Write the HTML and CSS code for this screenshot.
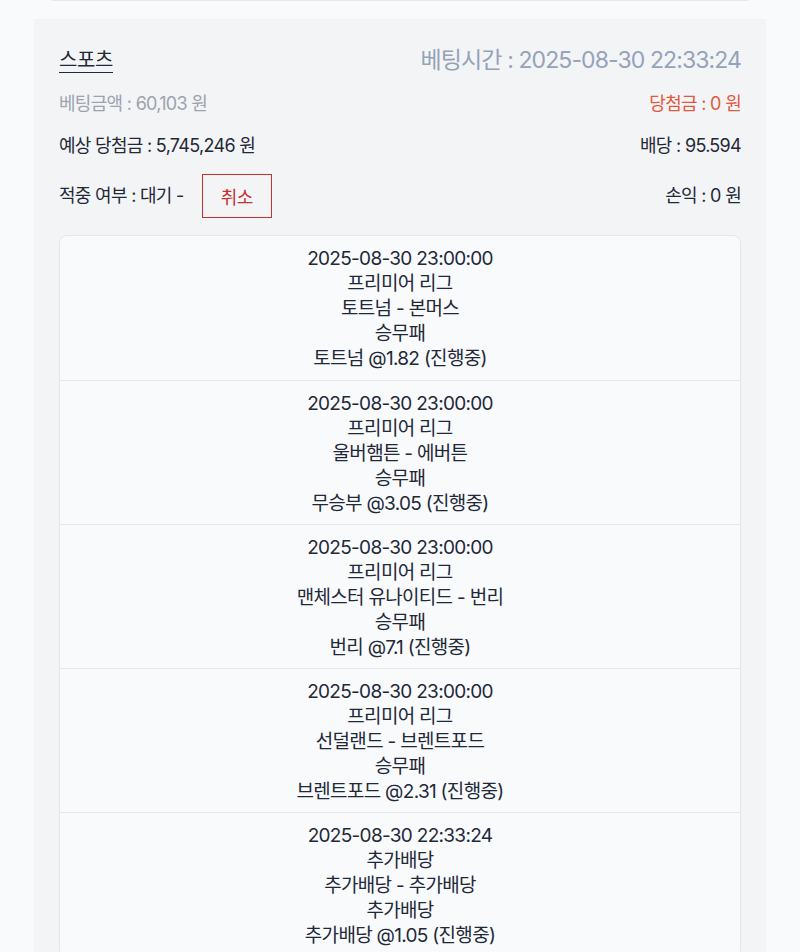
FILE: index.html
```html
<!DOCTYPE html>
<html lang="ko">
<head>
    <meta charset="UTF-8">
    <meta name="viewport" content="width=device-width, initial-scale=1.0">
    <title>베팅내역</title>
    <link rel="stylesheet" href="styles.css">
</head>
<body>
    <div class="prev-card"></div>

    <!-- Bet card -->
    <div class="bet-card">
        <div class="row head">
            <span class="title">스포츠</span>
            <span class="bet-time">베팅시간 : 2025-08-30 22:33:24</span>
        </div>
        <div class="row r2">
            <span class="muted">베팅금액 : 60,103 원</span>
            <span class="win">당첨금 : 0 원</span>
        </div>
        <div class="row r3">
            <span>예상 당첨금 : 5,745,246 원</span>
            <span>배당 : 95.594</span>
        </div>
        <div class="row r4">
            <span class="status">적중 여부 : 대기 - <button class="cancel">취소</button></span>
            <span>손익 : 0 원</span>
        </div>

        <div class="games">
            <div class="game">
                <div>2025-08-30 23:00:00</div>
                <div>프리미어 리그</div>
                <div>토트넘 - 본머스</div>
                <div>승무패</div>
                <div>토트넘 @1.82 (진행중)</div>
            </div>
            <div class="game">
                <div>2025-08-30 23:00:00</div>
                <div>프리미어 리그</div>
                <div>울버햄튼 - 에버튼</div>
                <div>승무패</div>
                <div>무승부 @3.05 (진행중)</div>
            </div>
            <div class="game">
                <div>2025-08-30 23:00:00</div>
                <div>프리미어 리그</div>
                <div>맨체스터 유나이티드 - 번리</div>
                <div>승무패</div>
                <div>번리 @7.1 (진행중)</div>
            </div>
            <div class="game">
                <div>2025-08-30 23:00:00</div>
                <div>프리미어 리그</div>
                <div>선덜랜드 - 브렌트포드</div>
                <div>승무패</div>
                <div>브렌트포드 @2.31 (진행중)</div>
            </div>
            <div class="game">
                <div>2025-08-30 22:33:24</div>
                <div>추가배당</div>
                <div>추가배당 - 추가배당</div>
                <div>추가배당</div>
                <div>추가배당 @1.05 (진행중)</div>
            </div>
        </div>
    </div>
</body>
</html>
```

FILE: styles.css
```css
body {
    margin: 0;
    font-family: Inter, "Noto Sans CJK KR", sans-serif;
    background-color: #f8fafc;
    color: #1f2937;
    letter-spacing: -0.7px;
}
.prev-card {
    height: 40px;
    margin: -41px 44px 0;
    background-color: #fff;
    border: 1px solid #e5e7eb;
    border-radius: 10px;
}
.bet-card {
    margin: 18px 34px 0;
    padding: 27px 25px 0;
    background-color: #f3f4f6;
}
.row {
    display: flex;
    justify-content: space-between;
    align-items: center;
    font-size: 18px;
    line-height: 24px;
}
.head {
    line-height: 28px;
}
.title {
    font-size: 20px;
    letter-spacing: -0.4px;
    text-decoration: underline;
    text-decoration-thickness: 1px;
    text-underline-offset: 5px;
}
.bet-time {
    font-size: 23px;
    letter-spacing: -0.9px;
    color: #94a3b8;
}
.r2 {
    margin-top: 18px;
}
.r3 {
    margin-top: 18px;
}
.r4 {
    margin-top: 16px;
}
.muted {
    color: #9ca3af;
}
.win {
    color: #e4583e;
}
.status {
    display: flex;
    align-items: center;
}
.cancel {
    margin-left: 18px;
    width: 70px;
    height: 44px;
    font-family: inherit;
    font-size: 18px;
    letter-spacing: -0.7px;
    color: #c53030;
    background: transparent;
    border: 1.5px solid #c53030;
    cursor: pointer;
}
.games {
    margin-top: 17px;
    background-color: #f8fafc;
    border: 1px solid #e5e7eb;
    border-radius: 8px;
    box-shadow: 0 1px 2px rgba(0, 0, 0, 0.04);
}
.game {
    padding: 10px 0 8px;
    text-align: center;
    font-size: 19px;
    line-height: 25px;
}
.game:first-child {
    padding-bottom: 9px;
}
.game + .game {
    border-top: 1px solid #e5e7eb;
}
```
